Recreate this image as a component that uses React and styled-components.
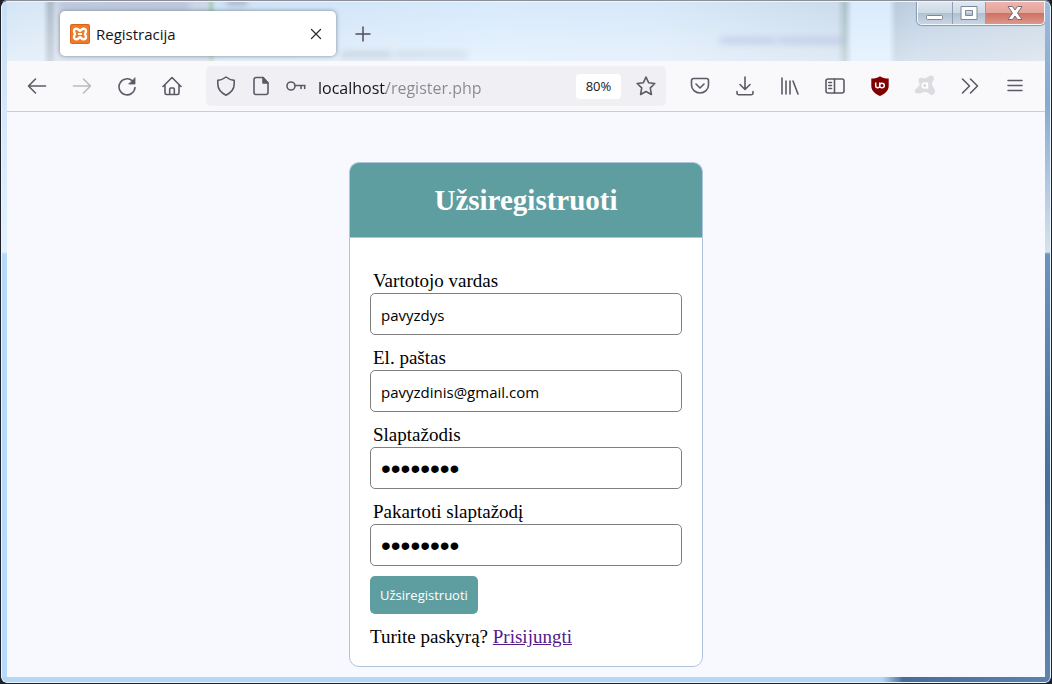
import React from "react";
import styled, { createGlobalStyle } from "styled-components";

const GlobalStyle = createGlobalStyle`
  *, *::before, *::after { box-sizing: border-box; }
  html, body { margin: 0; padding: 0; }
  body { background: #1d222c; }
  button { font: inherit; border: 0; padding: 0; background: none; cursor: pointer; }
`;

const uiFont = `"Open Sans", "Noto Sans", sans-serif`;
const serifFont = `"Liberation Serif", "Times New Roman", serif`;

const Window = styled.div`
  display: flex;
  flex-direction: column;
  min-height: 100vh;
  border: 1px solid #1d222c;
  border-top-color: #8d8f98;
  border-radius: 7px;
  overflow: hidden;
`;

const Glass = styled.div`
  flex: 1;
  display: flex;
  flex-direction: column;
  border: 1px solid #eef6fd;
  border-radius: 6px;
  padding: 0 5px 5px;
  background:
    linear-gradient(90deg, #b4d7f8 0%, #b4d7f8 84%, #4a6c98 86%, #5b82ae 100%) bottom / 100% 5px no-repeat,
    linear-gradient(#c9dff5 0, #e4f1fd 250px, #b5d8fb 252px, #b9dbfb 100%) left / 5px 100% no-repeat,
    linear-gradient(#9db9d8 0, #86a9d0 100px, #d6e2ec 250px, #6b93bd 252px, #47709d 70%, #5f84ae 100%) right / 5px 100% no-repeat,
    #d8e8f8;
`;

const TitleBar = styled.header`
  position: relative;
  display: flex;
  align-items: flex-start;
  height: 59px;
  padding-left: 53px;
  overflow: hidden;
  background:
    linear-gradient(rgba(255, 255, 255, 0) 0%, rgba(255, 255, 255, 0.4) 100%),
    linear-gradient(90deg,
      #d3e5f6 0, #d8e7f5 36px, #aebccb 42px, #b2bfce 45px, #ccd9e9 49px,
      #cbd6e6 200px, #a9cdb8 204px, #cfe2f5 209px, #d7eafc 480px, #d7e8f9 650px,
      #cbdcec 830px, #a9c0c9 838px, #d9ebfc 845px, #d9ebfc 882px,
      #b9cbdd 889px, #bfd1e4 910px, #ccd9e6 100%);
`;

const Smudge = styled.span`
  position: absolute;
  left: ${(p) => p.$x}px;
  top: ${(p) => p.$y}px;
  width: ${(p) => p.$w}px;
  height: 7px;
  background: ${(p) => p.$color};
  filter: blur(3px);
`;

const Tab = styled.div`
  position: relative;
  display: flex;
  align-items: center;
  width: 276px;
  height: 45px;
  margin-top: 9px;
  padding: 0 10px;
  gap: 6px;
  border-radius: 5px;
  background: #fff;
  box-shadow: 0 0 4px rgba(60, 70, 90, 0.6);
  font: 15px/20px ${uiFont};
  color: #15141a;
`;

const TabTitle = styled.span`
  flex: 1;
`;

const TabClose = styled.button`
  display: flex;
  align-items: center;
  justify-content: center;
  width: 20px;
  height: 20px;
`;

const NewTab = styled.button`
  position: relative;
  display: flex;
  align-items: center;
  justify-content: center;
  width: 30px;
  height: 30px;
  margin: 17px auto 0 12px;
`;

const Controls = styled.div`
  position: relative;
  display: flex;
  height: 23px;
  border: 1px solid #f2f7fb;
  border-top: 0;
  border-radius: 0 0 5px 5px;
  overflow: hidden;
  box-shadow: 0 0 1px 1px #8798ac;
`;

const Control = styled.button`
  display: flex;
  align-items: center;
  justify-content: center;
  width: ${(p) => p.$width}px;
  border-right: 1px solid #8fa0b4;
  background: linear-gradient(#dfe8f1 0%, #cdd9e5 48%, #b1c1d2 52%, #c8d5e3 100%);

  &:last-child {
    border-right: 0;
    background: linear-gradient(#eeb5ad 0%, #e3a49b 48%, #cd7165 52%, #dd988a 100%);
  }
`;

const NavBar = styled.nav`
  display: flex;
  align-items: center;
  height: 51px;
  padding: 0 8px 0 7px;
  background: #f9f9fb;
  border-bottom: 1px solid #ccccd2;
  color: #5b5b66;
`;

const ToolButton = styled.button`
  display: flex;
  align-items: center;
  justify-content: center;
  width: ${(p) => p.$width || 45}px;
  height: 40px;
  flex: none;
  color: inherit;
  opacity: ${(p) => (p.disabled ? 0.4 : 1)};
`;

const AddressBar = styled.div`
  flex: 1;
  min-width: 0;
  display: flex;
  align-items: center;
  height: 40px;
  margin: 0 11px 0 12px;
  padding: 0 5px 0 2px;
  border-radius: 5px;
  background: #f0f0f4;
`;

const Address = styled.input`
  flex: 1;
  min-width: 0;
  height: 30px;
  margin-left: 5px;
  padding: 3px 0 0;
  border: 0;
  outline: 0;
  font: 16px/24px ${uiFont};
  color: transparent;
  background: linear-gradient(90deg, #15141a 68px, #88888f 68px);
  background-clip: text;
  -webkit-background-clip: text;
`;

const ZoomLevel = styled.button`
  width: 45px;
  height: 25px;
  margin-right: 10px;
  border-radius: 4px;
  background: #fff;
  color: #15141a;
  && { font: 13px/25px ${uiFont}; }
`;

const Page = styled.main`
  flex: 1;
  padding: 50px 20px 10px;
  background: #f8f9ff;
  font: 19px/25px ${serifFont};
  color: #000;
`;

const Card = styled.section`
  width: 100%;
  max-width: 354px;
  margin: 0 auto;
`;

const CardHeader = styled.div`
  padding: 20px;
  border: 1px solid #b0c4de;
  border-bottom: 0;
  border-radius: 10px 10px 0 0;
  background: #5f9ea0;
  text-align: center;
`;

const CardTitle = styled.h1`
  margin: 0;
  font: bold 29px/34px ${serifFont};
  color: #fff;
`;

const Form = styled.form`
  padding: 30px 20px 17px;
  border: 1px solid #b0c4de;
  border-radius: 0 0 10px 10px;
  background: #fff;
`;

const Field = styled.div`
  display: flex;
  flex-direction: column;
  margin-bottom: 10px;
`;

const Label = styled.label`
  padding-left: 3px;
`;

const TextInput = styled.input`
  width: 100%;
  height: 42px;
  padding: 4px 10px 2px;
  border: 1px solid #808080;
  border-radius: 5px;
  outline: 0;
  background: #fff;
  color: #000;
  font: ${(p) => (p.type === "password" ? `28px/32px "Liberation Sans", sans-serif` : `15px/24px ${uiFont}`)};
`;

const Submit = styled.button`
  display: block;
  height: 38px;
  padding: 0 10px;
  border-radius: 5px;
  background: #5f9ea0;
  color: #fff;
  && { font: 13px/38px ${uiFont}; }
`;

const Note = styled.p`
  margin: 10px 0 0;
`;

const NoteLink = styled.a`
  color: #551a8b;
`;

const Line = ({ size = 20, children, width = 1.6, color = "currentColor" }) => (
  <svg width={size} height={size} viewBox={`0 0 ${size} ${size}`} fill="none" stroke={color}
    strokeWidth={width} strokeLinecap="round" strokeLinejoin="round" aria-hidden="true">
    {children}
  </svg>
);

const XamppIcon = () => (
  <svg width="20" height="20" viewBox="0 0 20 20" aria-hidden="true">
    <rect width="20" height="20" rx="2" fill="#d9651c" />
    <rect x="1" y="1" width="18" height="18" rx="1" fill="#f07a28" />
    <path d="M6.6 4.7c2 0 2.200 2 3.400 2s1.400-2 3.400-2c1.700 0 2.600 1.100 2.600 2.600 0 1.400-1 1.700-1 2.700s1 1.300 1 2.700c0 1.500-.9 2.600-2.600 2.600-2 0-2.200-2-3.400-2s-1.400 2-3.400 2C4.900 15.300 4 14.200 4 12.700c0-1.400 1-1.700 1-2.700s-1-1.300-1-2.700c0-1.500.9-2.600 2.600-2.600z"
      fill="none" stroke="#fff" strokeWidth="2.400" />
    <path d="M8 10h4" stroke="#fff" strokeWidth="2" />
  </svg>
);

const UblockIcon = () => (
  <svg width="20" height="20" viewBox="0 0 20 20" fill="none" aria-hidden="true">
    <path d="M10 .3c2 1.700 5 2.300 8.700 2.300v7.400c0 5-4 7.800-8.700 10-4.700-2.200-8.700-5-8.700-10V2.600C5 2.600 8 2 10 .3z" fill="#800000" />
    <path d="M5.700 6.500v3.200a2 2 0 0 0 4 0V6.500M9.700 9.500a2.300 2.300 0 1 0 2.300-2.300 2.300 2.300 0 0 0-2.300 2.300z" stroke="#fff" strokeWidth="1.500" />
  </svg>
);

const AvastIcon = () => (
  <svg width="22" height="22" viewBox="0 0 22 22" fill="none" aria-hidden="true">
    <path d="M12 3c1.500-.8 2.300-1.800 4-2.300 2.700-.6 4.600 1.700 3.700 4-.5 1.400-1.700 2-1.700 4.300 0 2.500 3 4.300 3 7.500 0 2.300-1.700 3.700-3.600 3.500-2.400-.2-2.400-2.500-5.400-3-3-.4-4.500 1.300-7 1.400-2.700 0-4.300-.6-4.300-2.200C.7 13.500 5 12.500 5.500 9.500 5.800 7.400 4 6.500 4.500 4.700 5 3 7 2.500 8.500 3c1.400.4 2 .8 3.500 0z" fill="#dbdbe0" />
    <circle cx="10.700" cy="10.500" r="2.500" stroke="#fff" strokeWidth="1.600" />
    <path d="M13.500 7.500v6.300" stroke="#fff" strokeWidth="1.600" />
  </svg>
);

const fields = [
  { id: "username", label: "Vartotojo vardas", type: "text", value: "pavyzdys" },
  { id: "email", label: "El. paštas", type: "email", value: "pavyzdinis@gmail.com" },
  { id: "password", label: "Slaptažodis", type: "password", value: "pavyzdys" },
  { id: "password2", label: "Pakartoti slaptažodį", type: "password", value: "pavyzdys" },
];

export default function App() {
  return (
    <>
      <GlobalStyle />
      <Window>
        <Glass>
          <TitleBar>
            <Smudge $x={52} $y={0} $w={130} $color="rgba(120,125,165,.25)" />
            <Smudge $x={220} $y={-4} $w={20} $color="rgba(120,125,150,.5)" />
            <Smudge $x={334} $y={49} $w={50} $color="rgba(110,125,135,.2)" />
            <Smudge $x={388} $y={49} $w={72} $color="rgba(110,125,135,.14)" />
            <Smudge $x={713} $y={35} $w={56} $color="rgba(125,140,215,.24)" />
            <Smudge $x={772} $y={35} $w={64} $color="rgba(125,140,215,.24)" />
            <Tab>
              <XamppIcon />
              <TabTitle>Registracija</TabTitle>
              <TabClose aria-label="Uždaryti kortelę">
                <Line size={12} width={1.2} color="#2b2a33"><path d="M1.500 1.500l9 9M10.500 1.500l-9 9" /></Line>
              </TabClose>
            </Tab>
            <NewTab aria-label="Nauja kortelė">
              <Line size={16} width={1.5} color="#4f4f59"><path d="M8 1v14M1 8h14" /></Line>
            </NewTab>
            <Controls>
              <Control $width={35} aria-label="Sumažinti">
                <svg width="18" height="18" viewBox="0 0 18 18"><rect x=".5" y="11.500" width="16" height="4" rx="1" fill="#fff" stroke="#7c8899" /></svg>
              </Control>
              <Control $width={33} aria-label="Išdidinti">
                <svg width="18" height="14" viewBox="0 0 18 14"><path d="M1 .5h16v13H1zM5.500 4.500v5h7v-5z" fillRule="evenodd" fill="#fff" stroke="#7c8899" /></svg>
              </Control>
              <Control $width={58} aria-label="Užverti">
                <svg width="16" height="14" viewBox="0 0 16 14"><path d="M1 .5h4.500L8 4l2.500-3.500H15L10.500 7l4.500 6.500h-4.500L8 10l-2.500 3.500H1L5.500 7z" fill="#fff" stroke="#7b6b77" /></svg>
              </Control>
            </Controls>
          </TitleBar>

          <NavBar>
            <ToolButton aria-label="Atgal"><Line><path d="M18.500 10H1.500M8.500 3L1.500 10l7 7" /></Line></ToolButton>
            <ToolButton aria-label="Pirmyn" disabled><Line><path d="M1.500 10h17M11.500 3l7 7-7 7" /></Line></ToolButton>
            <ToolButton aria-label="Įkelti iš naujo">
              <Line><path d="M15.500 5A8 8 0 1 0 18 11.500" /><path d="M18 2v6h-6z" fill="currentColor" strokeWidth=".8" /></Line>
            </ToolButton>
            <ToolButton aria-label="Pradžia">
              <Line><path d="M1 10.500L10 1.500l9 9M3 9v8a1.500 1.500 0 0 0 1.500 1.500h11A1.500 1.500 0 0 0 17 17V9M7.700 18v-5a1 1 0 0 1 1-1h2.600a1 1 0 0 1 1 1v5" /></Line>
            </ToolButton>
            <AddressBar>
              <ToolButton $width={35} aria-label="Apsauga">
                <Line><path d="M10 1c2.500 2 5 3 8.200 3.400V8c0 5-3.200 8.700-8.200 11.200C5 16.700 1.800 13 1.800 8V4.400C5 4 7.500 3 10 1z" /></Line>
              </ToolButton>
              <ToolButton $width={35} aria-label="Svetainės informacija">
                <Line><path d="M12 1.500H5A2 2 0 0 0 3 3.500v13a2 2 0 0 0 2 2h10a2 2 0 0 0 2-2V7z" /><path d="M12 1.500V7h5z" fill="currentColor" /></Line>
              </ToolButton>
              <ToolButton $width={35} aria-label="Slaptažodžiai">
                <Line><circle cx="5" cy="10" r="4" /><path d="M9 9.500h10M15 9.500v3M18.700 9.500v3" /></Line>
              </ToolButton>
              <Address aria-label="Adresas" defaultValue="localhost/register.php" spellCheck={false} />
              <ZoomLevel>80%</ZoomLevel>
              <ToolButton $width={30} aria-label="Pridėti adresą">
                <Line><path d="M10 1l2.600 5.700 6.200.8-4.500 4.300 1.100 6.700L10 15.500l-5.400 3 1.100-6.700L1.200 7.500l6.200-.8z" /></Line>
              </ToolButton>
            </AddressBar>
            <ToolButton aria-label="Pocket">
              <Line><path d="M3.500 2.500h13A2 2 0 0 1 18.500 4.500V9a8.500 8 0 0 1-17 0V4.500A2 2 0 0 1 3.500 2.500zM6 8l4 4 4-4" /></Line>
            </ToolButton>
            <ToolButton aria-label="Atsiuntimai">
              <Line><path d="M10 1v12M5 8.500l5 5 5-5M2 15.500v1.500A1.700 1.700 0 0 0 3.700 18.700h12.600A1.700 1.700 0 0 0 18 17v-1.500" /></Line>
            </ToolButton>
            <ToolButton aria-label="Archyvas">
              <Line><path d="M2 2v16M6 5v13M10 5v13M13 5l5 13" /></Line>
            </ToolButton>
            <ToolButton aria-label="Šoninė juosta">
              <Line><rect x="1" y="3" width="18" height="14" rx="2" /><path d="M9.500 3v14M3.800 6.500h2.700M3.800 9.500h2.700M3.800 12.500h2.700" /></Line>
            </ToolButton>
            <ToolButton aria-label="uBlock"><UblockIcon /></ToolButton>
            <ToolButton aria-label="Avast"><AvastIcon /></ToolButton>
            <ToolButton aria-label="Daugiau įrankių">
              <Line><path d="M2.500 3l7 7-7 7M10.500 3l7 7-7 7" /></Line>
            </ToolButton>
            <ToolButton aria-label="Meniu">
              <Line width={1.5}><path d="M3 4.500h14M3 9.500h14M3 14.500h14" /></Line>
            </ToolButton>
          </NavBar>

          <Page>
            <Card>
              <CardHeader>
                <CardTitle>Užsiregistruoti</CardTitle>
              </CardHeader>
              <Form onSubmit={(e) => e.preventDefault()}>
                {fields.map((f) => (
                  <Field key={f.id}>
                    <Label htmlFor={f.id}>{f.label}</Label>
                    <TextInput id={f.id} name={f.id} type={f.type} defaultValue={f.value} spellCheck={false} />
                  </Field>
                ))}
                <Submit type="submit">Užsiregistruoti</Submit>
                <Note>
                  Turite paskyrą? <NoteLink href="#login">Prisijungti</NoteLink>
                </Note>
              </Form>
            </Card>
          </Page>
        </Glass>
      </Window>
    </>
  );
}
